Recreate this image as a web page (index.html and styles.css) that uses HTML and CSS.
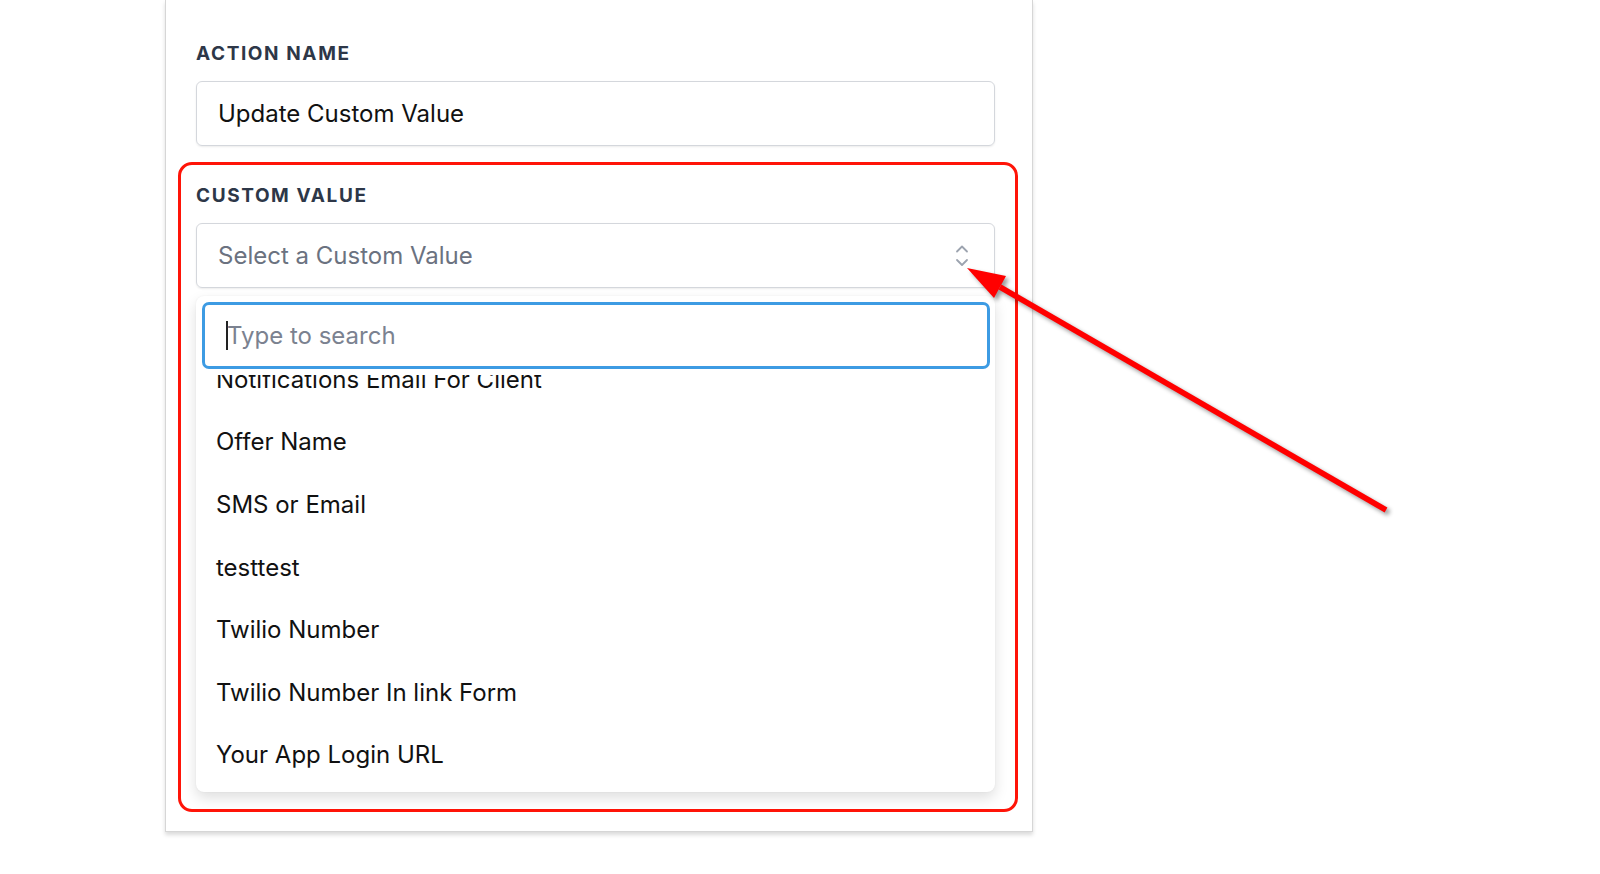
FILE: index.html
```html
<!DOCTYPE html>
<html lang="en">
<head>
<meta charset="utf-8">
<title>Update Custom Value</title>
<link rel="stylesheet" href="styles.css">
</head>
<body>
<div class="page">
  <div class="card">
    <section class="field">
      <label class="field-label">Action Name</label>
      <div class="text-input">Update Custom Value</div>
    </section>

    <section class="highlight">
      <label class="field-label">Custom Value</label>
      <div class="select">
        <span class="select-placeholder">Select a Custom Value</span>
        <svg class="chevrons" width="14" height="24" viewBox="0 0 14 24" aria-hidden="true">
          <polyline points="2,7.5 7,2.5 12,7.5" />
          <polyline points="2,16 7,21 12,16" />
        </svg>
      </div>
      <div class="dropdown">
        <div class="search">
          <span class="caret"></span>
          <input class="search-input" type="text" placeholder="Type to search">
        </div>
        <div class="options">
          <ul class="options-inner">
            <li class="option">Notifications Email For Client</li>
            <li class="option">Offer Name</li>
            <li class="option">SMS or Email</li>
            <li class="option">testtest</li>
            <li class="option">Twilio Number</li>
            <li class="option">Twilio Number In link Form</li>
            <li class="option">Your App Login URL</li>
          </ul>
        </div>
      </div>
    </section>
  </div>

  <svg class="annotation" width="1600" height="874" viewBox="0 0 1600 874" aria-hidden="true">
    <g class="arrow">
      <line x1="1386" y1="510" x2="1000" y2="287" />
      <polygon points="967,268 1006,276 994,298" />
    </g>
  </svg>
</div>
</body>
</html>
```

FILE: styles.css
```css
* {
  box-sizing: border-box;
}

html, body {
  margin: 0;
  padding: 0;
  background: #ffffff;
}

body {
  font-family: "Inter", "Noto Sans", "Liberation Sans", sans-serif;
  color: #111827;
  width: 1600px;
  height: 874px;
  overflow: hidden;
}

.page {
  position: relative;
  width: 1600px;
  height: 874px;
}

.card {
  margin-left: 165px;
  width: 868px;
  padding: 43px 37px 19px 30px;
  background: #ffffff;
  border: 1px solid #d6d6d6;
  border-top: none;
  box-shadow: 0 3px 4px rgba(0, 0, 0, 0.14);
  display: flex;
  flex-direction: column;
}

.field {
  display: flex;
  flex-direction: column;
}

.field-label {
  display: block;
  font-size: 19px;
  line-height: 22px;
  font-weight: 700;
  letter-spacing: 1.6px;
  text-transform: uppercase;
  color: #2d3748;
  margin-bottom: 16px;
}

.text-input {
  height: 65px;
  border: 1px solid #d4d7dc;
  border-radius: 6px;
  padding: 0 21px;
  display: flex;
  align-items: center;
  font-size: 24px;
  color: #111111;
  box-shadow: 0 1px 2px rgba(0, 0, 0, 0.08);
}

.highlight {
  margin: 16px -23px 0 -18px;
  padding: 20px 20px 17px 15px;
  border: 3px solid #ff1408;
  border-radius: 14px;
  display: flex;
  flex-direction: column;
}

.select {
  height: 65px;
  border: 1px solid #d4d7dc;
  border-radius: 6px;
  padding: 0 25px 0 21px;
  display: flex;
  align-items: center;
  justify-content: space-between;
  box-shadow: 0 1px 2px rgba(0, 0, 0, 0.08);
}

.select-placeholder {
  font-size: 24px;
  color: #6b7280;
}

.chevrons polyline {
  fill: none;
  stroke: #9ca3af;
  stroke-width: 1.8;
  stroke-linecap: round;
  stroke-linejoin: round;
}

.dropdown {
  margin-top: 8px;
  padding: 6px 5px 6px 6px;
  background: #ffffff;
  border-radius: 8px;
  box-shadow: 0 6px 14px rgba(0, 0, 0, 0.13), 0 0 2px rgba(0, 0, 0, 0.06);
  display: flex;
  flex-direction: column;
}

.search {
  height: 67px;
  border: 3px solid #3d9be3;
  border-radius: 7px;
  padding: 0 20px 0 21px;
  display: flex;
  align-items: center;
  position: relative;
  z-index: 1;
  background: #ffffff;
}

.caret {
  width: 2px;
  height: 29px;
  background: #222222;
  flex: none;
}

.search-input {
  flex: 1;
  border: none;
  outline: none;
  padding: 0;
  margin-left: -1px;
  font-family: inherit;
  font-size: 24px;
  color: #111827;
  background: transparent;
}

.search-input::placeholder {
  color: #7b8290;
}

.options {
  height: 411px;
  margin-top: 6px;
  overflow: hidden;
}

.options-inner {
  list-style: none;
  margin: -27px 0 0 0;
  padding: 0;
}

.option {
  height: 62.6px;
  padding: 0 14px;
  display: flex;
  align-items: center;
  font-size: 24px;
  color: #111111;
}

.annotation {
  position: absolute;
  left: 0;
  top: 0;
  pointer-events: none;
}

.arrow {
  filter: drop-shadow(3px 3px 2px rgba(0, 0, 0, 0.4));
}

.arrow line {
  stroke: #ff0000;
  stroke-width: 5.5;
  stroke-linecap: butt;
}

.arrow polygon {
  fill: #ff0000;
}
```
